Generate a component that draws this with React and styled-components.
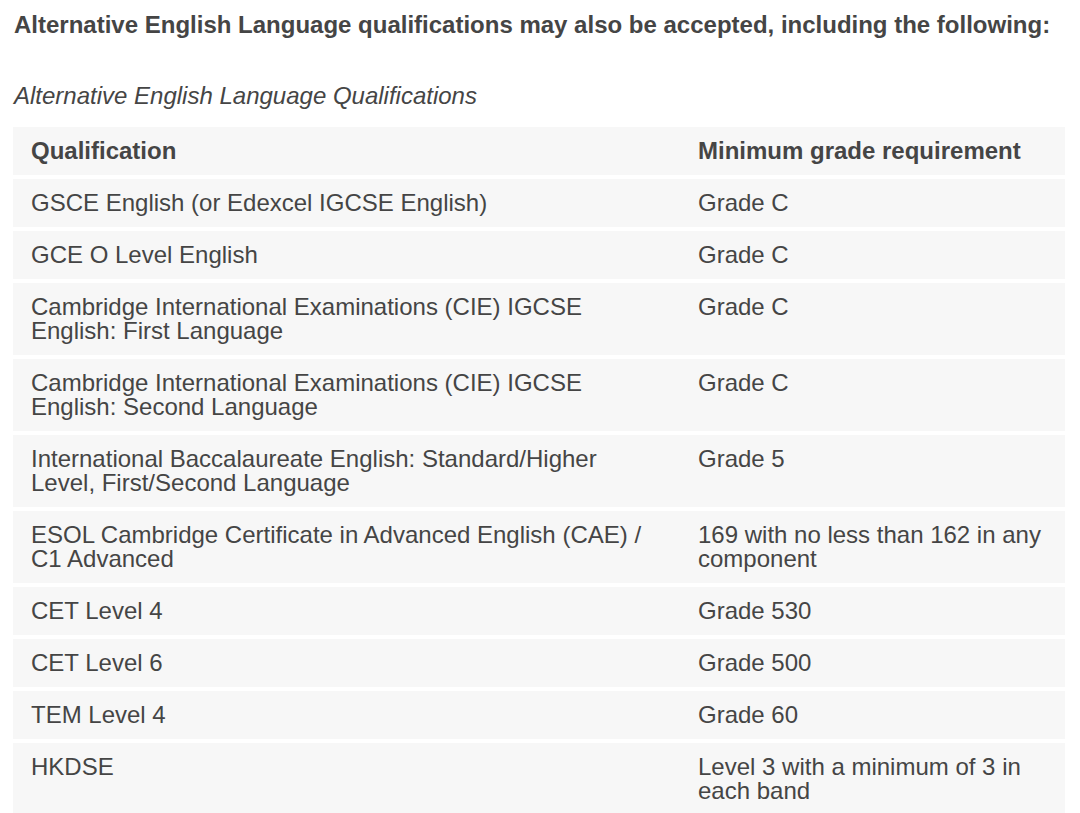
import styled, { createGlobalStyle } from "styled-components";

const GlobalStyle = createGlobalStyle`
  body {
    margin: 0;
    background: #fff;
    font-family: "Liberation Sans", Arial, sans-serif;
    color: #454545;
  }
`;

const Page = styled.div`
  padding: 13px 15px 0 13px;
`;

const Intro = styled.p`
  margin: 0 0 47px 1px;
  font-size: 24px;
  line-height: 24px;
  font-weight: 700;
`;

const Table = styled.table`
  width: 1052px;
  border-collapse: separate;
  border-spacing: 0 4px;
`;

const Caption = styled.caption`
  text-align: left;
  font-style: italic;
  font-size: 24px;
  line-height: 24px;
  padding: 0 0 15px 1px;
`;

const Cell = styled.td`
  background: #f7f7f7;
  padding: 12px 18px;
  font-size: 24px;
  line-height: 24px;
  vertical-align: top;
  text-align: left;
  width: ${(p) => (p.$first ? "631px" : "auto")};
`;

const HeadCell = styled(Cell).attrs({ as: "th" })`
  font-weight: 700;
`;

const rows = [
  ["GSCE English (or Edexcel IGCSE English)", "Grade C"],
  ["GCE O Level English", "Grade C"],
  [
    "Cambridge International Examinations (CIE) IGCSE English: First Language",
    "Grade C",
  ],
  [
    "Cambridge International Examinations (CIE) IGCSE English: Second Language",
    "Grade C",
  ],
  [
    "International Baccalaureate English: Standard/Higher Level, First/Second Language",
    "Grade 5",
  ],
  [
    "ESOL Cambridge Certificate in Advanced English (CAE) / C1 Advanced",
    "169 with no less than 162 in any component",
  ],
  ["CET Level 4", "Grade 530"],
  ["CET Level 6", "Grade 500"],
  ["TEM Level 4", "Grade 60"],
  ["HKDSE", "Level 3 with a minimum of 3 in each band"],
];

export default function App() {
  return (
    <>
      <GlobalStyle />
      <Page>
        <Intro>
          Alternative English Language qualifications may also be accepted,
          including the following:
        </Intro>
        <Table>
          <Caption>Alternative English Language Qualifications</Caption>
          <thead>
            <tr>
              <HeadCell $first>Qualification</HeadCell>
              <HeadCell>Minimum grade requirement</HeadCell>
            </tr>
          </thead>
          <tbody>
            {rows.map(([qualification, grade]) => (
              <tr key={qualification}>
                <Cell $first>{qualification}</Cell>
                <Cell>{grade}</Cell>
              </tr>
            ))}
          </tbody>
        </Table>
      </Page>
    </>
  );
}
